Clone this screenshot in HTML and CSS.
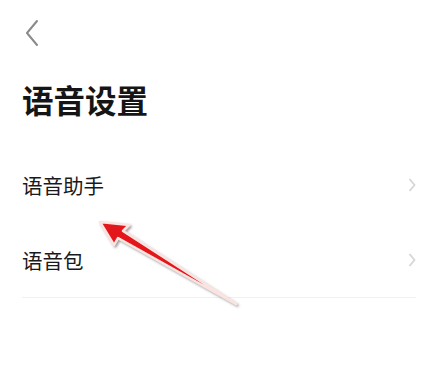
FILE: index.html
```html
<!DOCTYPE html>
<html lang="zh-CN">
<head>
    <meta charset="UTF-8">
    <meta name="viewport" content="width=device-width, initial-scale=1.0">
    <title>语音设置</title>
    <link rel="stylesheet" href="styles.css">
</head>
<body>
    <div class="page">
        <div class="topbar">
            <svg class="back" width="20" height="30" viewBox="0 0 20 30">
                <polyline points="15,3 5,15 15,27" fill="none" stroke="#8a8a8a" stroke-width="2" stroke-linecap="round" stroke-linejoin="round"/>
            </svg>
        </div>

        <h1 class="title">语音设置</h1>

        <ul class="menu">
            <li class="menu-item">
                <span>语音助手</span>
                <svg class="chevron" width="8" height="16" viewBox="0 0 8 16">
                    <polyline points="1.5,2 6.5,8 1.5,14" fill="none" stroke="#d6d6d6" stroke-width="1.8"/>
                </svg>
            </li>
            <li class="menu-item">
                <span>语音包</span>
                <svg class="chevron" width="8" height="16" viewBox="0 0 8 16">
                    <polyline points="1.5,2 6.5,8 1.5,14" fill="none" stroke="#d6d6d6" stroke-width="1.8"/>
                </svg>
            </li>
        </ul>

        <!-- flèche d'annotation par-dessus la liste -->
        <svg class="arrow" width="437" height="388" viewBox="0 0 437 388">
            <defs>
                <filter id="glow" x="-20%" y="-20%" width="140%" height="140%">
                    <feDropShadow dx="1.5" dy="1.5" stdDeviation="1" flood-color="#555" flood-opacity="0.6"/>
                </filter>
            </defs>
            <polygon points="100,222 129,225 123,231 236,304 118,238 114,245"
                     fill="#e3161c" stroke="#fbe3e0" stroke-width="2.5" stroke-linejoin="round" filter="url(#glow)"/>
        </svg>
    </div>
</body>
</html>
```

FILE: styles.css
```css
body {
    margin: 0;
    background: #fff;
    font-family: "Noto Sans CJK SC", "Noto Sans", sans-serif;
    color: #111;
}
.page {
    position: relative;
    width: 437px;
    height: 388px;
    overflow: hidden;
}
.topbar {
    height: 60px;
    padding: 18px 0 0 22px;
    box-sizing: border-box;
}
.back {
    display: block;
}
.title {
    margin: 0;
    padding: 19px 0 0 22px;
    font-size: 31.5px;
    line-height: 40px;
    font-weight: 700;
    color: #151515;
}
.menu {
    list-style: none;
    margin: 28px 21px 0 22px;
    padding: 0;
    border-bottom: 1px solid #f1f1f1;
}
.menu-item {
    display: flex;
    align-items: center;
    justify-content: space-between;
    height: 75px;
    font-size: 20.5px;
    color: #1a1a1a;
}
.chevron {
    display: block;
}
.arrow {
    position: absolute;
    left: 0;
    top: 0;
}
```
